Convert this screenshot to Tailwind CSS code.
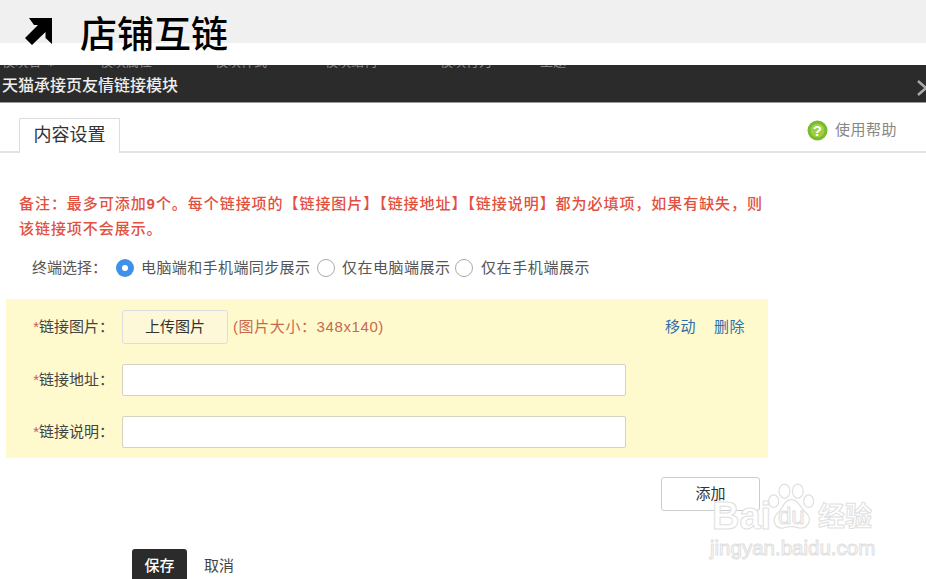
<!DOCTYPE html>
<html lang="zh-CN">
<head>
    <meta charset="UTF-8">
    <title>店铺互链</title>
    <script src="https://cdn.jsdelivr.net/npm/@tailwindcss/browser@4"></script>
</head>
<body class="relative w-[926px] h-[579px] overflow-hidden bg-white font-['Liberation_Sans','Noto_Sans_CJK_SC',sans-serif] text-[#444]">

    <!-- Title band -->
    <div class="h-[43px] bg-[#f0f0f0] flex items-start pl-[24px] pt-[17px]">
        <svg class="w-[28px] h-[28px] mt-[1px]" viewBox="0 0 28 28"><path d="M5 0 H28 V26 L21.500 20 V14 L8 27 L1 20 L14 7 H10 Z" fill="#000"/></svg>
        <h1 class="ml-[28px] text-[37px] leading-[37px] text-black font-medium">店铺互链</h1>
    </div>
    <div class="h-[22px]"></div>

    <!-- Dark dialog bar -->
    <div class="h-[38px] bg-[#2b2b2b] border-b border-[#999] relative">
        <div class="h-[3px] overflow-hidden flex text-[13px] leading-[13px] text-[#888] pl-[2px]">
            <span class="-mt-[10px] w-[98px]">模块名 ⚙</span><span class="-mt-[10px] w-[115px]">模块属性</span><span class="-mt-[10px] w-[110px]">模块样式</span><span class="-mt-[10px] w-[115px]">模块结构</span><span class="-mt-[10px] w-[100px]">模块行为</span><span class="-mt-[10px]">主题</span>
        </div>
        <div class="pl-[2px] pt-[8px] text-[16px] leading-[20px] font-medium text-[#eee]">天猫承接页友情链接模块</div>
        <svg class="absolute right-0 top-[15px] w-[9px] h-[16px]" viewBox="0 0 9 16"><path d="M1 1 L9 8 L1 15" fill="none" stroke="#aaa" stroke-width="2.500"/></svg>
    </div>

    <!-- Tabs -->
    <div class="h-[50px] border-b-2 border-[#e3e3e3] flex items-end justify-between pl-[19px]">
        <div class="w-[101px] h-[35px] -mb-[2px] bg-white border border-b-0 border-[#ddd] text-[18px] leading-[33px] text-center text-[#333]">内容设置</div>
        <div class="flex items-center self-start mt-[16px] mr-[29px] text-[15px] tracking-[0.5px] text-[#888]">
            <svg class="w-[21px] h-[21px]" viewBox="0 0 21 21">
                <circle cx="10.500" cy="10.500" r="10" fill="#7cb92e"/>
                <circle cx="10.500" cy="10.500" r="7" fill="#9bd044"/>
                <text x="10.500" y="16" text-anchor="middle" font-size="15" font-weight="700" fill="#fff">?</text>
            </svg>
            <span class="ml-[7px]">使用帮助</span>
        </div>
    </div>

    <!-- Note -->
    <p class="mt-[38px] ml-[19px] text-[15px] leading-[25px] font-medium tracking-[0.95px] text-[#e2503f] whitespace-nowrap">备注：最多可添加<b>9</b>个。每个链接项的【链接图片】【链接地址】【链接说明】都为必填项，如果有缺失，则<br>该链接项不会展示。</p>

    <!-- Terminal radios -->
    <div class="mt-[15px] ml-[32px] h-[24px] flex items-center text-[15px] text-[#555] whitespace-nowrap">
        <span class="w-[84px]">终端选择：</span>
        <span class="w-[18px] h-[18px] rounded-full bg-[#3f90e8] flex items-center justify-center"><span class="w-[6px] h-[6px] rounded-full bg-white"></span></span>
        <span class="ml-[7px] w-[169px] tracking-[0.4px]">电脑端和手机端同步展示</span>
        <span class="ml-[7px] w-[18px] h-[18px] rounded-full bg-white border border-[#aaa]"></span>
        <span class="ml-[7px] w-[109px] tracking-[0.5px]">仅在电脑端展示</span>
        <span class="ml-[4px] w-[18px] h-[18px] rounded-full bg-white border border-[#aaa]"></span>
        <span class="ml-[8px] tracking-[0.6px]">仅在手机端展示</span>
    </div>

    <!-- Link item -->
    <div class="mt-[19px] ml-[6px] w-[762px] h-[159px] bg-[#fefacd] pt-[11px] text-[15px] text-[#444]">
        <div class="flex items-center h-[34px]">
            <label class="w-[108px] text-right whitespace-nowrap"><span class="text-[#d9534f]">*</span>链接图片：</label>
            <button class="ml-[8px] w-[106px] h-[34px] border border-[#ddd] rounded-[3px] bg-[#fdf9d8] text-[#333]">上传图片</button>
            <span class="ml-[5px] tracking-[0.6px] text-[#c9694f]">(图片大小：348x140)</span>
            <a class="ml-auto tracking-[0.5px] text-[#2f6fae]">移动</a>
            <a class="ml-[18px] mr-[23px] tracking-[0.5px] text-[#2f6fae]">删除</a>
        </div>
        <div class="flex items-center h-[32px] mt-[20px]">
            <label class="w-[108px] text-right whitespace-nowrap"><span class="text-[#d9534f]">*</span>链接地址：</label>
            <input class="ml-[8px] w-[504px] h-[32px] bg-white border border-[#d4d2c0] rounded-[2px]">
        </div>
        <div class="flex items-center h-[32px] mt-[20px]">
            <label class="w-[108px] text-right whitespace-nowrap"><span class="text-[#d9534f]">*</span>链接说明：</label>
            <input class="ml-[8px] w-[504px] h-[32px] bg-white border border-[#d4d2c0] rounded-[2px]">
        </div>
    </div>

    <!-- Add -->
    <div class="mt-[19px] ml-[661px]">
        <button class="w-[99px] h-[34px] border border-[#ccc] rounded-[3px] bg-white text-[15px] text-[#333]">添加</button>
    </div>

    <!-- Actions -->
    <div class="mt-[38px] ml-[132px] flex items-start text-[15px]">
        <button class="w-[55px] h-[34px] bg-[#2b2b2b] rounded-t-[3px] text-white font-medium">保存</button>
        <span class="ml-[17px] leading-[34px] text-[#444]">取消</span>
    </div>

    <!-- Watermark -->
    <div class="absolute left-[710px] top-[478px] w-[170px] h-[84px] text-white">
        <svg class="absolute left-[57px] top-[2px] w-[50px] h-[54px]" viewBox="0 0 60 58" fill="#fff" stroke="#e0e0e0" stroke-width="1.500">
            <ellipse cx="21" cy="10" rx="6.500" ry="8.500"/>
            <ellipse cx="37" cy="10" rx="6.500" ry="8.500"/>
            <ellipse cx="8" cy="22" rx="6" ry="7.500"/>
            <ellipse cx="50" cy="22" rx="6" ry="7.500"/>
            <path d="M29 20 C38 20 40 31 48 37 C55 45 48 56 38 54 C32 52 26 52 20 54 C10 56 5 45 12 37 C20 31 20 20 29 20 Z"/>
        </svg>
        <span class="absolute left-[2px] top-[16px] text-[38px] leading-[44px] font-bold [-webkit-text-stroke:1px_#e0e0e0]">Bai</span>
        <span class="absolute left-[68px] top-[24px] text-[24px] leading-[28px] [-webkit-text-stroke:1px_#e0e0e0]">du</span>
        <span class="absolute left-[108px] top-[22px] text-[27px] leading-[34px] font-bold [-webkit-text-stroke:1px_#e0e0e0]">经验</span>
        <span class="absolute left-0 top-[59px] text-[20.500px] leading-[22px] [-webkit-text-stroke:1px_#e0e0e0]">jingyan.baidu.com</span>
    </div>
</body>
</html>
